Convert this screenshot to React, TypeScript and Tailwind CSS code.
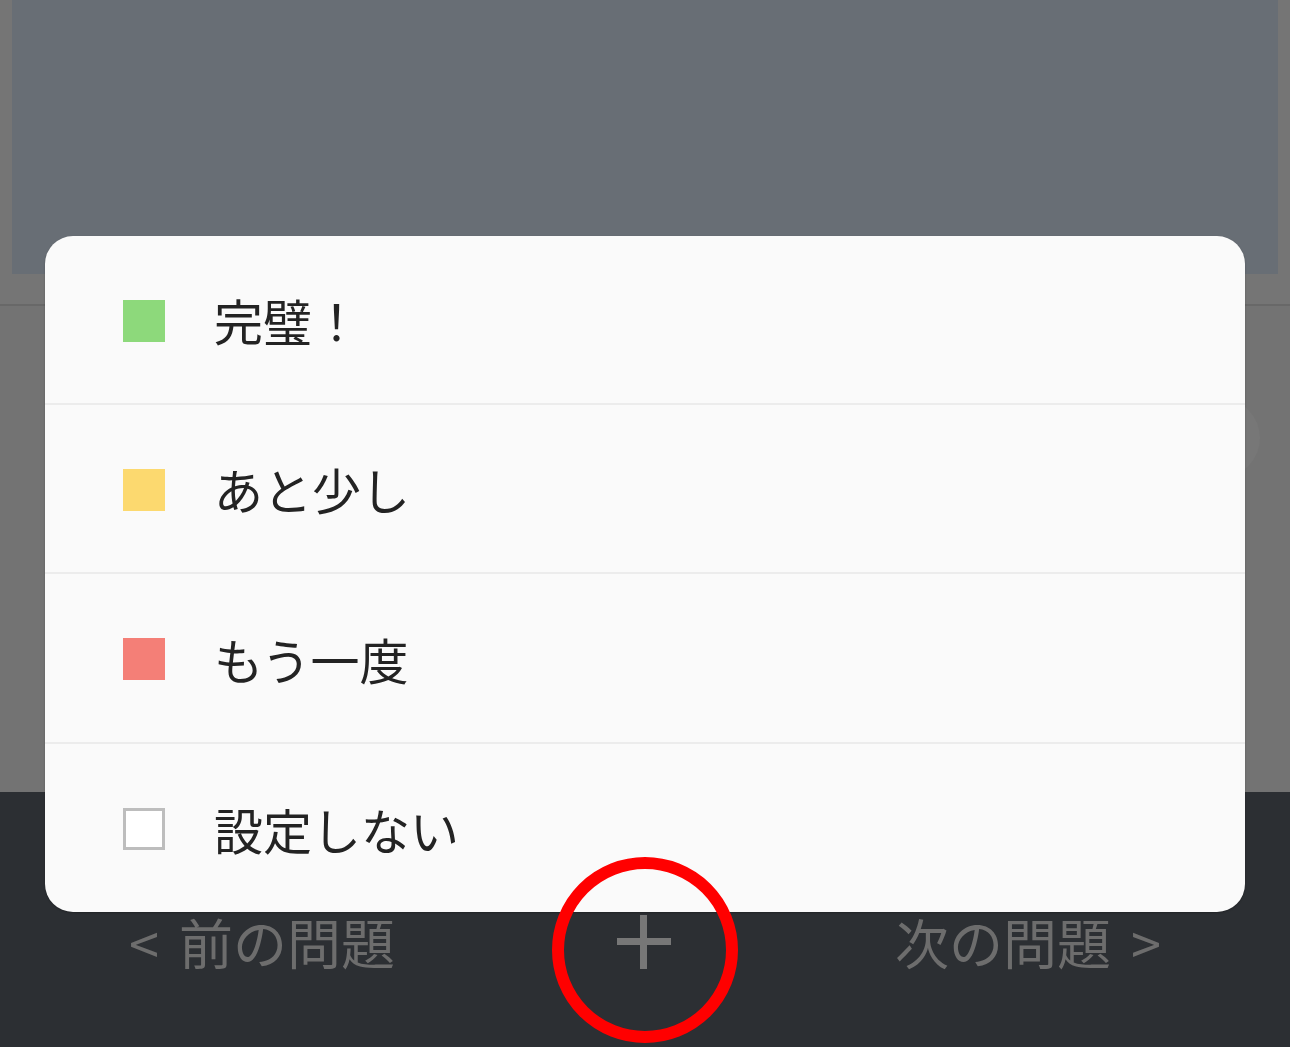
import React from "react";

const options = [
    { label: "完璧！", swatch: "bg-[#8dd97b]", h: "h-[169px]" },
    { label: "あと少し", swatch: "bg-[#fcd96f]", h: "h-[169px]" },
    { label: "もう一度", swatch: "bg-[#f47f77]", h: "h-[170px]" },
    { label: "設定しない", swatch: "bg-white border-[3px] border-[#bdbdbd]", h: "h-[168px]" },
];

const jp = { fontFamily: '"Noto Sans CJK JP", "Noto Sans", sans-serif' };

function RatingSheet() {
    return (
        <div className="absolute left-[45px] top-[236px] w-[1200px] rounded-[28px] bg-[#fafafa] shadow-[0_1px_2px_rgba(0,0,0,0.25)] overflow-hidden">
            {options.map((opt, i) => (
                <div
                    key={opt.label}
                    className={`flex items-center ${opt.h} pl-[78px] ${i < options.length - 1 ? "border-b-2 border-[#ececec]" : ""}`}
                >
                    <div className={`w-[42px] h-[42px] shrink-0 mt-[2px] ${opt.swatch}`} />
                    <span className="ml-[49px] text-[49px] leading-none text-[#232323]" style={jp}>
                        {opt.label}
                    </span>
                </div>
            ))}
        </div>
    );
}

export default function App() {
    return (
        <div className="relative w-[1290px] h-[1047px] overflow-hidden bg-[#737373]" style={jp}>
            {/* dimmed page behind the sheet */}
            <div className="flex flex-col h-full">
                <div className="bg-[#757575] px-[12px] pb-[30px]">
                    <div className="h-[274px] bg-[#686e75]" />
                </div>
                <div className="h-[2px] bg-[#686868]" />
                <div className="relative flex-1 bg-[#737373]">
                    <div className="absolute left-[1180px] top-[92px] w-[80px] h-[80px] rounded-full bg-[#777777]" />
                </div>
                <div className="h-[255px] bg-[#2c2f33] pt-[108px]">
                    <div className="flex items-center justify-between h-[84px] px-[129px] text-[54px] leading-none text-[#6d6d6d]">
                        <span className="flex items-center gap-[20px]">
                            <span>&lt;</span>
                            <span>前の問題</span>
                        </span>
                        <svg width="54" height="54" viewBox="0 0 54 54" className="mr-[2px]">
                            <rect x="0" y="23" width="54" height="7" fill="#777777" />
                            <rect x="23" y="0" width="7" height="54" fill="#777777" />
                        </svg>
                        <span className="flex items-center gap-[20px]">
                            <span>次の問題</span>
                            <span>&gt;</span>
                        </span>
                    </div>
                </div>
            </div>

            <RatingSheet />

            {/* annotation */}
            <div className="absolute left-[552px] top-[857px] w-[186px] h-[186px] rounded-full border-[12px] border-[#ff0000]" />
        </div>
    );
}
